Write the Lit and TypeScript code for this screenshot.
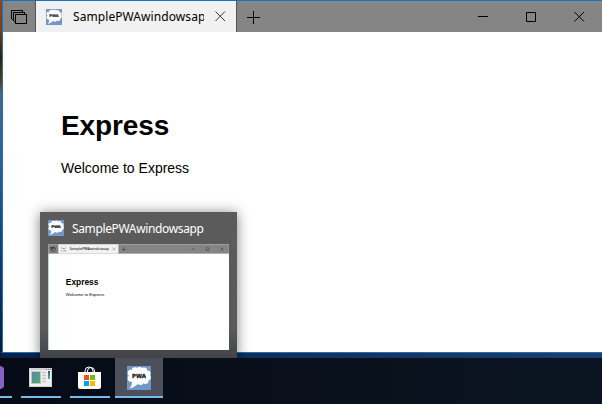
import { LitElement, html, css } from "lit";
import { customElement } from "lit/decorators.js";

const APP = "SamplePWAwindowsapp";

@customElement("pwa-icon")
class PwaIcon extends LitElement {
  static styles = css`
    :host { display: block; width: 16px; height: 16px; flex: none; }
    svg { display: block; width: 100%; height: 100%; }
    text { font: 900 5.6px "DejaVu Sans", sans-serif; }
  `;
  render() {
    return html`<svg viewBox="0 0 24 24">
      <rect width="24" height="24" fill="#7296ca" />
      <g fill="#fff">
        <rect x="3" y="4" width="18" height="12" rx="4" />
        <circle cx="4" cy="7" r="3.300" /><circle cx="8" cy="4.500" r="3.200" /><circle cx="12.500" cy="3.800" r="2.900" />
        <circle cx="17" cy="4.700" r="3.200" /><circle cx="20.500" cy="7.500" r="3" /><circle cx="20.800" cy="11.500" r="3" />
        <circle cx="18.500" cy="15" r="3" /><circle cx="13.500" cy="16" r="3" /><circle cx="8.500" cy="15.800" r="3.200" />
        <circle cx="4" cy="12.500" r="3.300" />
        <path d="M5 15l5 3q-2 3-7.500 4.500Q5 20 5 15z" />
      </g>
      <text x="12" y="12.100" text-anchor="middle" textLength="14" lengthAdjust="spacingAndGlyphs" fill="#10161c" stroke="#10161c" stroke-width=".25">PWA</text>
    </svg>`;
  }
}

@customElement("browser-window")
class BrowserWindow extends LitElement {
  static styles = css`
    :host { display: block; width: 600px; height: 353px; box-sizing: border-box; background: #fff;
      border: solid #1874bd; border-width: 1px 0 1px 1px; color: #000; }
    .bar { display: flex; height: 31px; background: #858585; }
    .tasks { width: 32px; border-right: 1px solid #555; }
    .tab { width: 200px; display: flex; align-items: center; background: #f1f1f1; border-right: 1px solid #555; }
    pwa-icon { margin-left: 10px; }
    .name { width: 131px; margin-left: 11px; overflow: hidden; white-space: nowrap;
      font: 12px/20px "Noto Sans", sans-serif; letter-spacing: 0.08px; padding-top: 1px; }
    .spacer { flex: 1; }
    svg { display: block; fill: none; stroke: #000; }
    .page { padding: 77px 58px 0; font-family: "Liberation Sans", sans-serif; }
    h1 { margin: 0; font-size: 28px; line-height: 34px; letter-spacing: -0.1px; }
    p { margin: 17px 0 0; font-size: 14px; line-height: 16px; }
  `;
  render() {
    return html`
      <div class="bar">
        <div class="tasks">
          <svg width="32" height="31" shape-rendering="crispEdges">
            <path d="M12.500 13.500h11v9h-11zM10.500 20v-8.500h11v2M8.500 18v-8.500h11v2M8.500 18h2M10.500 20h2" />
          </svg>
        </div>
        <div class="tab">
          <pwa-icon></pwa-icon>
          <div class="name">${APP}</div>
          <svg width="32" height="31"><path d="M11.500 10.500l9.500 9.500m0-9.500l-9.500 9.500" stroke="#333" /></svg>
        </div>
        <svg width="33" height="31" shape-rendering="crispEdges"><path d="M10 16.500h13M16.500 10v13" /></svg>
        <div class="spacer"></div>
        <svg width="144" height="31">
          <path d="M20 15.500h10M68.500 11.500h9v9h-9z" />
          <path d="M116.500 11l9.500 9.500m0-9.500l-9.500 9.500" />
        </svg>
      </div>
      <div class="page"><h1>Express</h1><p>Welcome to Express</p></div>
    `;
  }
}

@customElement("app-root")
class AppRoot extends LitElement {
  static styles = css`
    :host { display: block; position: relative; width: 602px; height: 404px; overflow: hidden; }
    .desktop { height: 358px; box-sizing: border-box; padding-left: 2px;
      background: linear-gradient(90deg, #0b2148, #1f3f6e) 0 353px / 100% 5px no-repeat,
        linear-gradient(#8a4525 0, #74401c 8%, #28230d 16%, #584018 23%, #47688a 26%, #315f96 45%, #153e78 70%, #071a3a 100%); }
    .taskbar { display: flex; height: 46px; background: linear-gradient(90deg, #060b16, #0b1521); }
    .item { height: 40px; box-sizing: border-box; border-bottom: 2px solid #76b9ed; display: flex; justify-content: center; }
    .item svg { display: block; flex: none; }
    .cut { width: 12px; margin-right: 9px; justify-content: flex-start; }
    .photos { width: 40px; margin-right: 9px; }
    .store { width: 40px; margin-right: 5px; }
    .active { width: 48px; background: #4b505a; }
    .active pwa-icon { width: 24px; height: 24px; margin-top: 8px; }
    .shade { position: absolute; left: 0; top: 0; width: 602px; height: 358px; overflow: hidden; }
    .preview { position: absolute; left: 40px; top: 212px; width: 197px; height: 146px; box-sizing: border-box; padding: 0 8px;
      background: linear-gradient(#5b5b5b 0, #5a5a5a 80%, #414347 100%); box-shadow: 0 1px 12px rgba(0, 0, 0, 0.5); }
    .head { height: 32px; display: flex; align-items: center; gap: 8px; color: #fff;
      font: 12px/20px "Noto Sans", sans-serif; letter-spacing: -0.36px; }
    .head span { padding-top: 2px; }
    .thumb { width: 181px; height: 106px; overflow: hidden; background: #fff; }
    .thumb browser-window { transform: scale(0.3015); transform-origin: 0 0; }
  `;
  render() {
    return html`
      <div class="desktop"><browser-window></browser-window></div>
      <div class="shade">
        <div class="preview">
          <div class="head"><pwa-icon></pwa-icon><span>${APP}</span></div>
          <div class="thumb"><browser-window></browser-window></div>
        </div>
      </div>
      <div class="taskbar">
        <div class="item cut">
          <svg width="12" height="38"><path d="M0 8h1l3 2v19l-3 2H0z" fill="#8661c5" /></svg>
        </div>
        <div class="item photos">
          <svg width="40" height="38">
            <defs><linearGradient id="g" x2="1" y2="1"><stop stop-color="#5b86a8" /><stop offset="1" stop-color="#4fae72" /></linearGradient>
            <linearGradient id="b" x2="0" y2="1"><stop stop-color="#264e90" /><stop offset="1" stop-color="#65b58a" /></linearGradient></defs>
            <rect x="8.500" y="10.500" width="22" height="18" fill="#f0f0ee" stroke="#d3d3d3" />
            <path d="M9 11.500h21" stroke="#cfcfcf" /><path d="M25 11.500h1m1 0h1m1 0h1" stroke="#777" />
            <rect x="10.500" y="13.500" width="9" height="12" fill="url(#g)" stroke="#b9c8c6" />
            <path d="M21 14.500h4M21 17.500h4M21 20.500h4M21 23.500h4" stroke="#c5c5c5" stroke-width="1.500" />
            <rect x="27" y="13" width="2" height="8" fill="url(#b)" />
          </svg>
        </div>
        <div class="item store">
          <svg width="40" height="38">
            <path d="M15 15v-2q0-4 4-4t4 4v2M17.500 15v-2q0-3.500 3.500-3.500t3.500 3.500v2" fill="none" stroke="#fff" />
            <path d="M8 14h23v15q0 2-2 2H10q-2 0-2-2z" fill="#fff" />
            <path d="M14 17h5v5h-5z" fill="#f25022" /><path d="M20 17h5v5h-5z" fill="#7fba00" />
            <path d="M14 23h5v5h-5z" fill="#00a4ef" /><path d="M20 23h5v5h-5z" fill="#ffb900" />
          </svg>
        </div>
        <div class="item active"><pwa-icon></pwa-icon></div>
      </div>
    `;
  }
}
